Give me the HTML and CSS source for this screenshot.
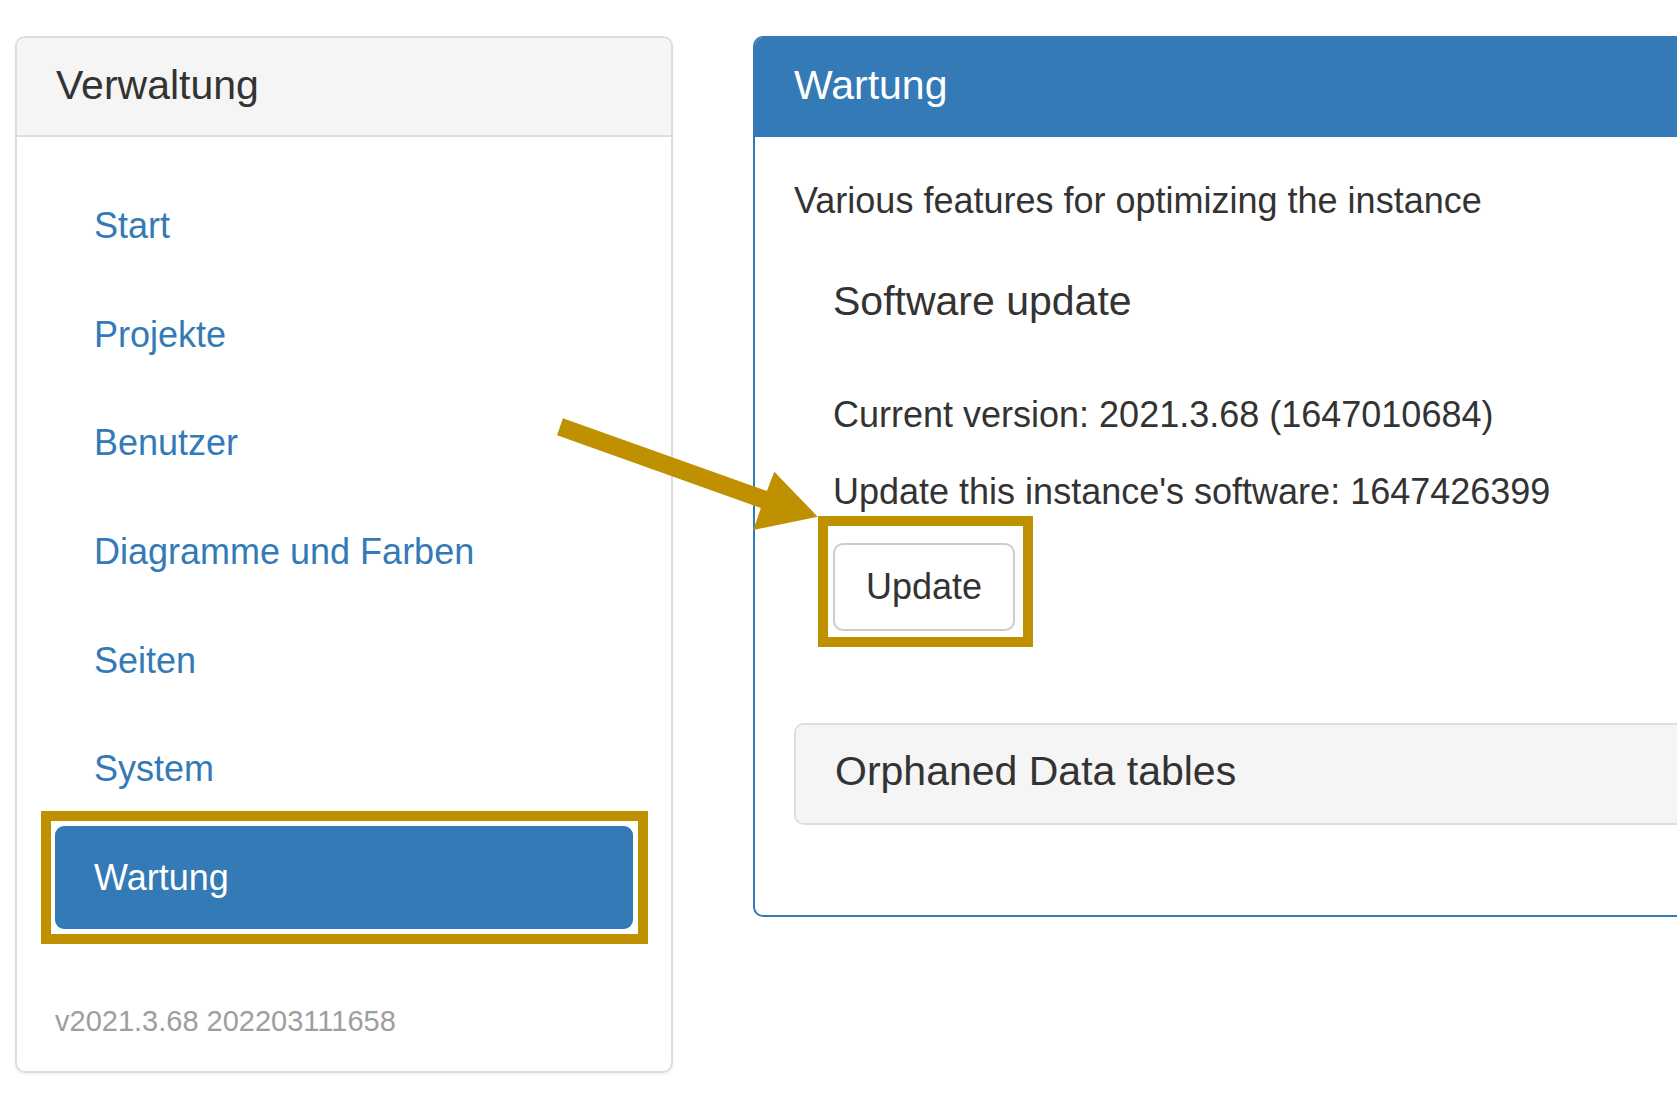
FILE: index.html
```html
<!DOCTYPE html>
<html lang="de">
<head>
<meta charset="utf-8">
<title>Verwaltung – Wartung</title>
<link rel="stylesheet" href="styles.css">
</head>
<body>
  <div class="layout">
    <aside class="panel panel-side">
      <div class="panel-heading">
        <h3 class="panel-title">Verwaltung</h3>
      </div>
      <div class="panel-body">
        <ul class="pills">
          <li><a href="#">Start</a></li>
          <li><a href="#">Projekte</a></li>
          <li><a href="#">Benutzer</a></li>
          <li><a href="#">Diagramme und Farben</a></li>
          <li><a href="#">Seiten</a></li>
          <li><a href="#">System</a></li>
          <li class="active marked"><a href="#">Wartung</a></li>
        </ul>
        <div class="version">v2021.3.68 202203111658</div>
      </div>
    </aside>

    <main class="panel panel-primary">
      <div class="panel-heading">
        <h3 class="panel-title">Wartung</h3>
      </div>
      <div class="panel-body">
        <p>Various features for optimizing the instance</p>

        <section class="sub">
          <div class="sub-heading">
            <h4 class="panel-title">Software update</h4>
          </div>
          <div class="sub-body">
            <p>Current version: 2021.3.68 (1647010684)</p>
            <p>Update this instance's software: 1647426399</p>
            <div class="btn-wrap marked-btn">
              <button class="btn" type="button">Update</button>
            </div>
          </div>
        </section>

        <section class="panel panel-default">
          <div class="panel-heading">
            <h4 class="panel-title">Orphaned Data tables</h4>
          </div>
        </section>
      </div>
    </main>
  </div>

  <svg class="pointer" width="300" height="150" viewBox="0 0 300 150" aria-hidden="true">
    <polygon points="22.9,18.2 226.9,91 234.3,71.7 277.7,116.7 213.3,130 220.9,108 17.1,35.2" fill="#bf9000"/>
  </svg>
</body>
</html>
```

FILE: styles.css
```css
* {
  box-sizing: border-box;
}

html,
body {
  margin: 0;
  padding: 0;
  background: #fff;
  overflow: hidden;
}

body {
  width: 1677px;
  height: 1097px;
  font-family: "Liberation Sans", Arial, sans-serif;
  font-size: 36px;
  line-height: 51.4px;
  color: #333;
  position: relative;
}

.layout {
  display: flex;
  align-items: flex-start;
  gap: 80px;
  padding: 36px 0 0 15px;
}

/* panels */
.panel {
  background: #fff;
  border: 2px solid #ddd;
  border-radius: 10px;
  overflow: hidden;
  box-shadow: 0 2px 3px rgba(0, 0, 0, 0.05);
  flex-shrink: 0;
}

.panel-heading {
  padding: 24.5px 39px 27.5px;
  border-bottom: 2px solid #ddd;
  background: #f5f5f5;
}

.panel-title {
  margin: 0;
  font-size: 41px;
  line-height: 45px;
  font-weight: normal;
}

.panel-side {
  width: 658px;
}

.panel-side .panel-body {
  padding: 37px 38px 29px;
}

/* nav pills */
.pills {
  list-style: none;
  margin: 0;
  padding: 0;
}

.pills li {
  position: relative;
}

.pills li + li {
  margin-top: 5.67px;
}

.pills a {
  display: block;
  padding: 26px 39px;
  line-height: 51px;
  color: #337ab7;
  text-decoration: none;
  border-radius: 9px;
}

.pills .active a {
  background: #337ab7;
  color: #fff;
}

.version {
  margin-top: 72px;
  font-size: 29px;
  line-height: 41px;
  color: #9e9e9e;
}

/* highlight frames */
.marked::after,
.marked-btn::after {
  content: "";
  position: absolute;
  border: 10px solid #bf9000;
  pointer-events: none;
}

.marked::after {
  top: -15px;
  left: -14px;
  right: -15px;
  bottom: -15px;
}

.marked-btn::after {
  top: -27px;
  left: -15px;
  right: -18px;
  bottom: -16px;
}

/* main panel */
.panel-primary {
  width: 1000px;
  border-color: #337ab7;
  box-shadow: none;
}

.panel-primary > .panel-heading {
  background: #337ab7;
  border-bottom-color: #337ab7;
  color: #fff;
}

.panel-primary > .panel-body {
  padding: 38px 39px 38.6px;
}

.panel-body p {
  margin: 0 0 25.7px;
}

.sub {
  margin-bottom: 51.4px;
}

.sub-heading {
  padding: 27px 39px 24px;
  border-bottom: 2px solid transparent;
}

.sub-body {
  padding: 38.6px 39px 40.6px;
}

.btn-wrap {
  position: relative;
  width: max-content;
}

.btn {
  display: block;
  margin: 0;
  padding: 16.4px 31px;
  font-family: inherit;
  font-size: 36px;
  line-height: 51.4px;
  color: #333;
  background: #fff;
  border: 2px solid #ccc;
  border-radius: 10px;
}

.panel-default {
  width: auto;
  margin-bottom: 51.4px;
  box-shadow: none;
  margin-right: -200px;
}

.panel-default > .panel-heading {
  padding: 24px 39px 29px;
  border-bottom: none;
}

/* annotation arrow pointing at the update button */
.pointer {
  position: absolute;
  left: 540px;
  top: 400px;
}
```
